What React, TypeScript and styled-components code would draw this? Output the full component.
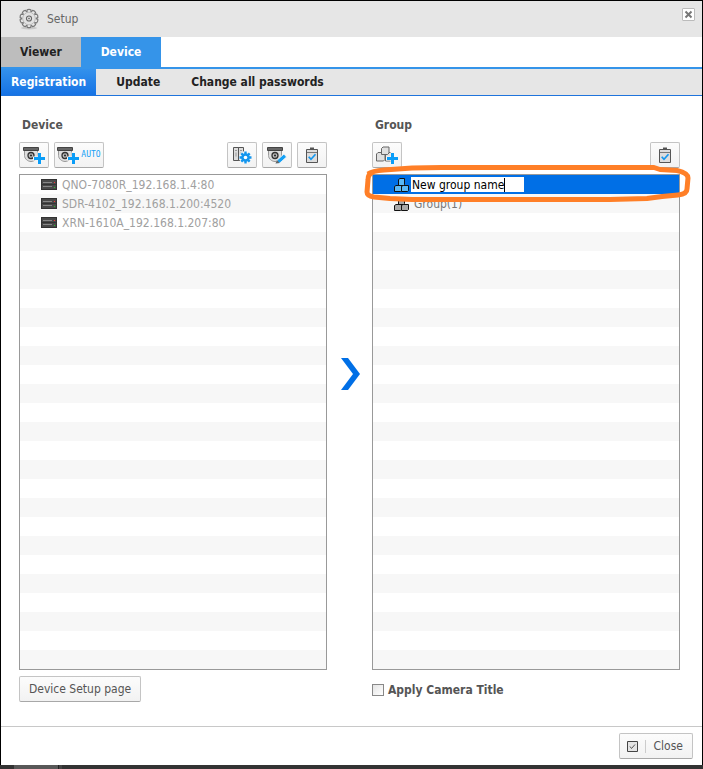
import React, { useState } from 'react';
import styled, { createGlobalStyle, css } from 'styled-components';

const GlobalStyle = createGlobalStyle`
  *, *::before, *::after { box-sizing: border-box; }
  body {
    margin: 0;
    background: #333;
    font: 12px/18px "DejaVu Sans Condensed", Tahoma, "Noto Sans", sans-serif;
    color: #555;
  }
  button, input { font: inherit; color: inherit; }
  h1, h2, ul { margin: 0; padding: 0; font: inherit; list-style: none; }
`;

const Page = styled.div`
  min-height: 100vh;
  display: flex;
  flex-direction: column;
`;

const Dialog = styled.main`
  flex: 1;
  display: flex;
  flex-direction: column;
  background: #fff;
  border: 1px solid #000;
  border-bottom: 0;
`;

const TitleBar = styled.header`
  display: flex;
  align-items: center;
  height: 36px;
  padding: 0 7px 0 18px;
  background: #e6e6e6;
`;

const Title = styled.h1`
  flex: 1;
  padding-left: 8px;
  color: #666;
`;

const DismissButton = styled.button`
  display: grid;
  place-items: center;
  align-self: flex-start;
  width: 13px;
  height: 13px;
  margin-top: 7px;
  padding: 0;
  background: #fff;
  border: 1px solid #bbb;
  border-radius: 1px;
`;

const Tabs = styled.nav`
  display: flex;
  height: 32px;
  border-bottom: 2px solid #3594e9;
`;

const Tab = styled.button<{ $active?: boolean }>`
  width: 80px;
  padding: 0;
  border: 0;
  font-weight: bold;
  background: ${(p) => (p.$active ? '#3594e9' : '#bdbdbd')};
  color: ${(p) => (p.$active ? '#fff' : '#222')};
`;

const SubTabs = styled.nav`
  display: flex;
  height: 27px;
  background: #e6e6e6;
  border-bottom: 1px solid #1f74dc;
`;

const SubTab = styled.button<{ $active?: boolean }>`
  padding: 0 10px;
  margin-right: 10px;
  border: 0;
  font-weight: bold;
  background: none;
  color: #222;
  & + & { margin-right: 11px; }
  ${(p) =>
    p.$active &&
    css`
      color: #fff;
      background: linear-gradient(#3391ec, #1673e5);
    `}
`;

const Columns = styled.div`
  flex: 1;
  display: flex;
  align-items: stretch;
  padding: 20px 22px 0 18px;
`;

const Column = styled.section`
  flex: 1 1 0;
  min-width: 0;
`;

const ColumnTitle = styled.h2`
  padding: 0 3px;
  font-weight: bold;
`;

const Toolbar = styled.div`
  display: flex;
  gap: 5px;
  height: 26px;
  margin: 8px 0 6px;
`;

const Spacer = styled.span`
  flex: 1;
`;

const raised = css`
  display: flex;
  align-items: center;
  justify-content: center;
  border: 1px solid #c4c4c4;
  border-bottom-color: #a8a8a8;
  border-radius: 2px;
  background: linear-gradient(#fcfcfc, #f2f2f2);
`;

const ToolButton = styled.button<{ $wide?: boolean }>`
  ${raised}
  width: ${(p) => (p.$wide ? '50px' : '30px')};
  padding: 0;
  gap: 2px;
`;

const AutoText = styled.span`
  font: 8px/10px "DejaVu Sans Mono", monospace;
  color: #14a0f5;
`;

const ListFrame = styled.div`
  position: relative;
`;

const List = styled.ul`
  border: 1px solid #999;
`;

const Row = styled.li<{ $selected?: boolean; $muted?: boolean }>`
  display: flex;
  align-items: center;
  gap: 5px;
  height: 19px;
  padding-left: 21px;
  color: ${(p) => (p.$muted ? '#a0a0a0' : '#777')};
  &:nth-child(even) { background: #f7f7f7; }
  ${(p) =>
    p.$selected &&
    css`
      gap: 2px;
      background: #006fe6;
    `}
`;

const EditBox = styled.label`
  display: flex;
  align-items: center;
  width: 113px;
  height: 15px;
  padding-left: 1px;
  background: #fff;
`;

const NameInput = styled.input`
  field-sizing: content;
  max-width: 110px;
  height: 15px;
  padding: 0;
  border: 0;
  outline: 0;
  background: none;
  color: #000;
  caret-color: transparent;
`;

const Caret = styled.span`
  width: 1px;
  height: 14px;
  background: #000;
`;

const Highlight = styled.svg`
  position: absolute;
  left: -10px;
  top: -12px;
  width: calc(100% + 24px);
  height: 44px;
  pointer-events: none;
`;

const Divider = styled.div`
  display: grid;
  place-items: center;
  width: 45px;
  padding: 0 0 95px 2px;
`;

const Below = styled.div`
  display: flex;
  align-items: center;
  height: 26px;
  margin-top: 6px;
`;

const WideButton = styled.button`
  ${raised}
  height: 26px;
  padding: 0 9px;
`;

const CheckLabel = styled.label`
  display: flex;
  align-items: center;
  gap: 4px;
  padding-top: 2px;
  font-weight: bold;
`;

const CheckBox = styled.input`
  appearance: none;
  width: 12px;
  height: 12px;
  margin: 0;
  border: 1px solid #888;
  background: linear-gradient(135deg, #e4e4e4, #fff);
  &:checked { background: #3594e9; }
`;

const Footer = styled.footer`
  display: flex;
  align-items: center;
  justify-content: flex-end;
  height: 39px;
  padding: 0 9px;
  border-top: 1px solid #c8c8c8;
`;

const CloseButton = styled.button`
  ${raised}
  height: 26px;
  padding: 0 9px 0 7px;
  gap: 7px;
`;

const Bar = styled.span`
  width: 1px;
  height: 13px;
  margin-right: 1px;
  background: #ccc;
`;

const Strip = styled.div`
  height: 4px;
  background: linear-gradient(90deg, #333 14px, #585858 14px, #585858 58px, #222 58px, #222 59px, #444 59px, #444 62px, #333 62px);
`;

const GearIcon = () => {
  const teeth = Array.from({ length: 10 }, (_, i) => i * 36);
  return (
    <svg width="20" height="22" viewBox="0 0 20 22" aria-hidden="true">
      <ellipse cx="10" cy="20" rx="8" ry="1.5" fill="#c8c8c8" />
      <g fill="#e6e6e6" stroke="#777" strokeWidth="1.2">
        {teeth.map((a) => (
          <path key={a} d="M7.8 4.2 8.2 1.8Q10 .8 11.8 1.8L12.2 4.2" transform={`rotate(${a} 10 10.5)`} />
        ))}
      </g>
      <circle cx="10" cy="10.5" r="6.3" fill="#e2e2e2" stroke="#bbb" />
      <circle cx="10" cy="10.5" r="2.5" fill="#f2f2f2" stroke="#666" strokeWidth="1.2" />
      <circle cx="10" cy="10.5" r="1" fill="#777" />
    </svg>
  );
};

const CrossIcon = () => (
  <svg width="9" height="9" viewBox="0 0 9 9" aria-hidden="true">
    <path d="m1.5 1.5 6 6m0-6-6 6" stroke="#777" strokeWidth="2" />
  </svg>
);

const CameraBody = () => (
  <>
    <path d="M1.5 5v4.500c0 3.500 3.500 6 6.500 6s6.500-2.500 6.500-6V5" fill="#dedede" stroke="#999" />
    <path d="M.5 1.500h15v3H.5z" fill="#666" stroke="#444" />
    <circle cx="8" cy="9.500" r="3" fill="#bbb" stroke="#333" strokeWidth="1.300" />
    <circle cx="8" cy="9.500" r="1" fill="#222" />
  </>
);

const CameraAddIcon = () => (
  <svg width="22" height="18" viewBox="0 0 22 18" aria-hidden="true">
    <CameraBody />
    <path d="M16.500 6v12M10 12.500h12" stroke="#f8f8f8" strokeWidth="4" />
    <path d="M16.500 7v11M11 12.500h11" stroke="#0a9df8" strokeWidth="3" />
  </svg>
);

const CameraEditIcon = () => (
  <svg width="20" height="18" viewBox="0 0 20 18" aria-hidden="true">
    <CameraBody />
    <path d="m9.500 17.500.8-3.500 6.700-6 2.500 3-6.700 6z" fill="#14a0f5" stroke="#f8f8f8" strokeWidth=".8" />
    <path d="m8.500 17.500 1.500-3.500 2.600 3z" fill="#666" />
  </svg>
);

const RackGearIcon = () => (
  <svg width="20" height="18" viewBox="0 0 20 18" aria-hidden="true">
    <path d="M1.500 1.500h5v13h-5zm5 0h5v13h-5z" fill="#ddd" stroke="#555" />
    <path d="M3 4.500h2m3 0h2m-6 2v4m5-4v4" stroke="#999" />
    <circle cx="13.500" cy="11.500" r="6.500" fill="#f8f8f8" />
    <g stroke="#1496ee" strokeWidth="2.400">
      <path d="M13.500 5.500v12M7.500 11.500h12M9.300 7.300l8.400 8.400M17.700 7.300l-8.400 8.400" />
    </g>
    <circle cx="13.500" cy="11.500" r="4.300" fill="#1496ee" />
    <circle cx="13.500" cy="11.500" r="1.800" fill="#fff" />
  </svg>
);

const ClipboardIcon = () => (
  <svg width="14" height="16" viewBox="0 0 14 16" aria-hidden="true">
    <path d="M1.500 2.500h11v13h-11z" fill="#ddd" stroke="#555" />
    <path d="M2 5.500h10" stroke="#777" />
    <path d="M5 .5h4v2H5z" fill="#555" />
    <path d="m3.700 9.700 2.300 2.600 4.500-5" fill="none" stroke="#1496ee" strokeWidth="1.700" />
  </svg>
);

const RackIcon = () => (
  <svg width="16" height="11" viewBox="0 0 16 11" aria-hidden="true">
    <path d="M0 0h16v11H0z" fill="#333" />
    <path d="M1 1h14v4H1zm0 5h14v4H1z" fill="#494949" />
    <path d="M2 3.500h9m-9 4h9" stroke="#888" />
    <path d="M13 3h1v1h-1z" fill="#f33" />
    <path d="M13 8h1v1h-1z" fill="#2c2" />
  </svg>
);

const CubesIcon = ({ fill }: { fill: string }) => (
  <svg width="15" height="14" viewBox="0 0 15 14" aria-hidden="true">
    <g fill={fill} stroke="#111" strokeLinejoin="round">
      <path d="M.5 8.500 2 7.500h5.500v5l-1 1h-6z" />
      <path d="M7.500 8.500 9 7.500h5.500v5l-1 1h-6z" />
      <path d="M4.500 1.500 6 .5h4.500v6l-1 1h-5z" />
    </g>
  </svg>
);

const CubesAddIcon = () => (
  <svg width="22" height="18" viewBox="0 0 22 18" aria-hidden="true">
    <g fill="#e0e0e0" stroke="#666" strokeLinejoin="round">
      <path d="M.5 8 2 6.500h7v7L7.500 15h-7z" />
      <path d="M9.500 8 11 6.500h6V15H9.500z" />
      <path d="M5.500 2.500 7 1h6v6l-1.500 1.500h-6z" />
    </g>
    <path d="M16.500 6v12M10 12.500h12" stroke="#f8f8f8" strokeWidth="4" />
    <path d="M16.500 7v11M11 12.500h11" stroke="#0a9df8" strokeWidth="3" />
  </svg>
);

const ChevronIcon = () => (
  <svg width="20" height="32" viewBox="0 0 20 32" aria-hidden="true">
    <path d="M0 0h7l12 16L7 32H0l12-16z" fill="#006fe6" />
  </svg>
);

const TickBoxIcon = () => (
  <svg width="11" height="11" viewBox="0 0 11 11" aria-hidden="true">
    <path d="M.5.5h10v10H.5z" fill="#e4e4e4" stroke="#444" />
    <path d="m3 5.500 1.500 2L8 3.500" fill="none" stroke="#555" />
  </svg>
);

const ROW_COUNT = 26;
const devices = ['QNO-7080R_192.168.1.4:80', 'SDR-4102_192.168.1.200:4520', 'XRN-1610A_192.168.1.207:80'];

const blankRows = (used: number) =>
  Array.from({ length: ROW_COUNT - used }, (_, i) => <Row key={`blank-${i}`} aria-hidden="true" />);

export default function App() {
  const [name, setName] = useState('New group name');
  const [applyTitle, setApplyTitle] = useState(false);

  return (
    <Page>
      <GlobalStyle />
      <Dialog>
        <TitleBar>
          <GearIcon />
          <Title>Setup</Title>
          <DismissButton aria-label="Close window"><CrossIcon /></DismissButton>
        </TitleBar>
        <Tabs>
          <Tab>Viewer</Tab>
          <Tab $active>Device</Tab>
        </Tabs>
        <SubTabs>
          <SubTab $active>Registration</SubTab>
          <SubTab>Update</SubTab>
          <SubTab>Change all passwords</SubTab>
        </SubTabs>
        <Columns>
          <Column>
            <ColumnTitle>Device</ColumnTitle>
            <Toolbar>
              <ToolButton aria-label="Add device"><CameraAddIcon /></ToolButton>
              <ToolButton $wide aria-label="Add devices automatically">
                <CameraAddIcon />
                <AutoText>AUTO</AutoText>
              </ToolButton>
              <Spacer />
              <ToolButton aria-label="Device settings"><RackGearIcon /></ToolButton>
              <ToolButton aria-label="Edit device"><CameraEditIcon /></ToolButton>
              <ToolButton aria-label="Select devices"><ClipboardIcon /></ToolButton>
            </Toolbar>
            <List>
              {devices.map((d) => (
                <Row key={d} $muted><RackIcon />{d}</Row>
              ))}
              {blankRows(devices.length)}
            </List>
            <Below>
              <WideButton>Device Setup page</WideButton>
            </Below>
          </Column>
          <Divider><ChevronIcon /></Divider>
          <Column>
            <ColumnTitle>Group</ColumnTitle>
            <Toolbar>
              <ToolButton aria-label="Add group"><CubesAddIcon /></ToolButton>
              <Spacer />
              <ToolButton aria-label="Select groups"><ClipboardIcon /></ToolButton>
            </Toolbar>
            <ListFrame>
              <List>
                <Row $selected>
                  <CubesIcon fill="#5ab8f5" />
                  <EditBox>
                    <NameInput aria-label="Group name" value={name} onChange={(e) => setName(e.target.value)} />
                    <Caret />
                  </EditBox>
                </Row>
                <Row><CubesIcon fill="#aaa" />Group(1)</Row>
                {blankRows(2)}
              </List>
              <Highlight viewBox="0 0 332 44" preserveAspectRatio="none" aria-hidden="true">
                <path
                  d="M6 12Q10 9 22 8L50 6 80 5.500H292L298 7.500 315 8.500Q326 11 326 16L325 27Q325 32 316 33L300 34.500 285 36.500 248 37.500H50L28 36.500 12 35Q5 34 5 30L6 18Q6 11 12 10"
                  fill="none"
                  stroke="#ff7f27"
                  strokeWidth="5"
                  strokeLinejoin="round"
                />
              </Highlight>
            </ListFrame>
            <Below>
              <CheckLabel>
                <CheckBox type="checkbox" checked={applyTitle} onChange={(e) => setApplyTitle(e.target.checked)} />
                Apply Camera Title
              </CheckLabel>
            </Below>
          </Column>
        </Columns>
        <Footer>
          <CloseButton><TickBoxIcon /><Bar />Close</CloseButton>
        </Footer>
      </Dialog>
      <Strip />
    </Page>
  );
}
